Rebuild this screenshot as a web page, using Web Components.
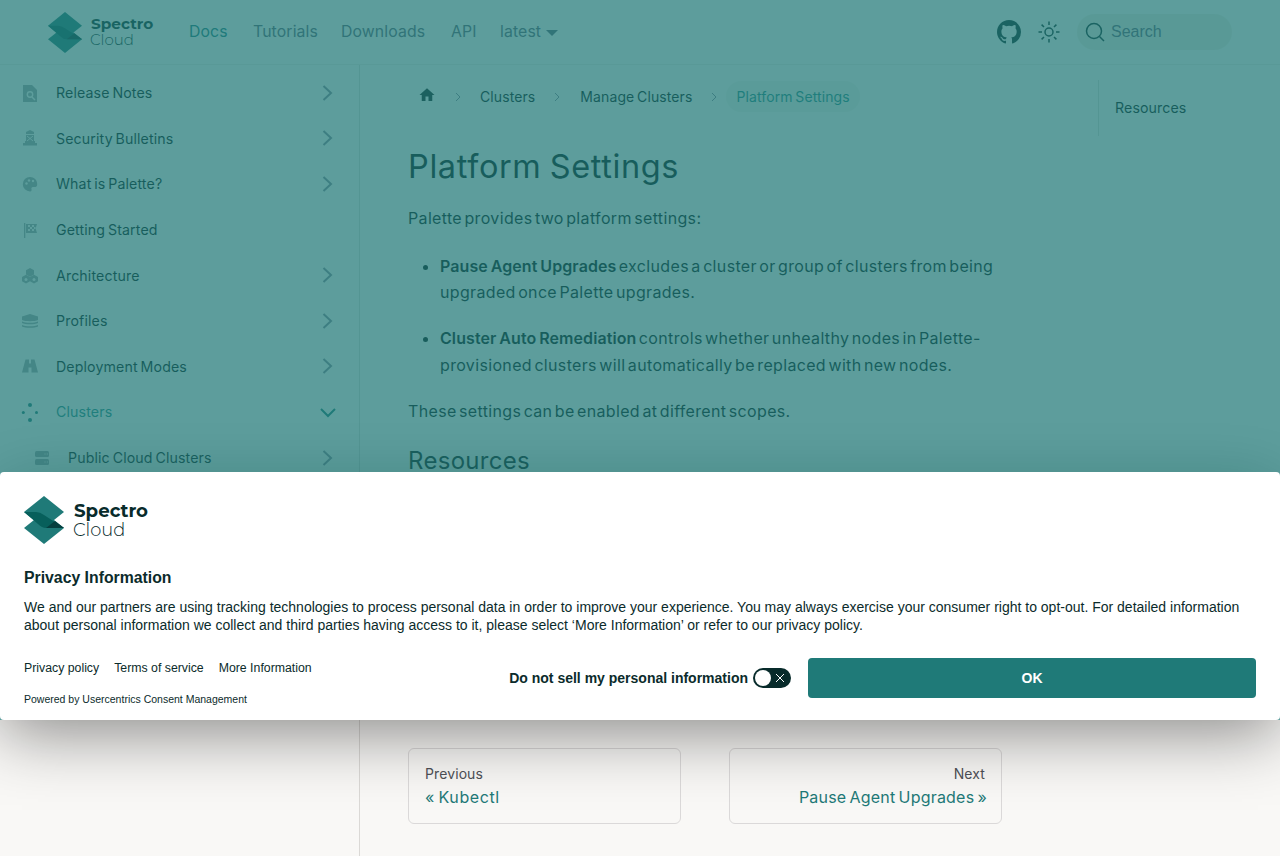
<!DOCTYPE html>
<html lang="en"><head><meta charset="utf-8"><title>Platform Settings</title>
<style>
html,body{margin:0;height:100%;overflow:hidden;background:#f9f8f6}
body{font-family:Inter,"Liberation Sans",sans-serif;color:#061414}
</style></head><body>
<template id="logo-t"><style>
:host{display:inline-flex;align-items:center;gap:var(--gap,8px);color:var(--ink,#082b2b);flex:none}
svg{display:block;flex:none}
.t{display:flex;flex-direction:column;font-family:Montserrat,Lato,sans-serif;font-size:var(--fs,15.300px);line-height:1.03;padding-top:var(--tp,0)}
b{font-weight:700;margin-left:1px}
span{font-weight:300;font-size:.98em}
</style>
<svg viewBox="0 0 40 48"><path d="M20 0 40 16 20 32 0 16Z" fill="#1f7a78"/><path d="M20 16 40 32 20 48 0 32Z" fill="#1f7a78"/><path d="M0 16 12 16 Q16 16 20 19L40 32H22Q18 32 14 28Z" fill="#075f5b"/><path d="M22 32 31 25 40 32Z" fill="#063f3f"/></svg>
<div class="t"><b>Spectro</b><span>Cloud</span></div></template>
<script>
function tpl(id){return document.getElementById(id).content.cloneNode(true)}
class SLogo extends HTMLElement{connectedCallback(){if(this.shadowRoot)return;this.attachShadow({mode:'open'}).append(tpl('logo-t'));
const s=this.shadowRoot.querySelector('svg');s.setAttribute('width',this.getAttribute('w'));s.setAttribute('height',this.getAttribute('h'));}}
customElements.define('s-logo',SLogo);
const H='#f9f8f6';
const ICONS={
release:`<path d="M3 2h9l5 5v12H3z"/><circle cx="10" cy="11.500" r="3.400" fill="${H}"/><circle cx="10" cy="11.500" r="2" /><path d="M12 14l3 3" stroke="${H}" stroke-width="1.500"/>`,
security:`<path d="M6 4l4-2 4 2v2H6zM6 7h8v6H6zM3 15h14v2.500H3zM5 13h10v2H5z"/><path d="M7 8l6 5M13 8l-6 5" stroke="${H}"/>`,
palette:`<path d="M10 3a7.200 7.200 0 1 0 0 14.400c1.800 0 1.800-1.400 1.400-2.700-.4-1.300.8-1.800 2.200-1.800h1.800c.9 0 1.800-.9 1.800-2.700C17.200 6.100 14 3 10 3z"/><circle cx="6.500" cy="9.500" r="1.200" fill="${H}"/><circle cx="9" cy="6.500" r="1.200" fill="${H}"/><circle cx="13" cy="7" r="1.200" fill="${H}"/>`,
flag:`<path d="M4 3h1.300v15H4zM6 4h11l-1.400 4.500L17 13H6z"/><path d="M8 5h2v2H8zM12 5h2v2h-2zM10 7h2v2h-2zM14 7h1.500v2H14zM8 9h2v2H8zM12 9h2v2h-2z" fill="${H}"/>`,
arch:`<path d="M10 3l4 2.200v4.300L10 11.700 6 9.500V5.200z"/><path d="M6 9.800l4 2.200v4.300L6 18.500 2 16.300V12zM14 9.800l4 2.200v4.300l-4 2.200-4-2.200V12z"/><circle cx="6" cy="14.500" r="1.500" fill="${H}"/><circle cx="14" cy="14.500" r="1.500" fill="${H}"/>`,
profiles:`<path d="M10 3l8 2.500V9c-3 1.600-13 1.600-16 0V5.500z"/><path d="M2 10.500c3 1.700 13 1.700 16 0V12c-3 1.700-13 1.700-16 0zM2 14c3 1.700 13 1.700 16 0v1.500c-3 1.700-13 1.700-16 0z"/>`,
bino:`<path d="M5.500 3.500h3.500v4h2v-4h3.500L18 16.500h-6.500v-5h-3v5H2z"/>`,
clusters:'<circle cx="10" cy="3" r="2"/><circle cx="10" cy="18" r="2"/><circle cx="3.300" cy="10.500" r="1.500"/><circle cx="16.500" cy="10.500" r="1.500"/>',
server:`<rect x="3" y="3" width="14" height="6" rx="1.500"/><rect x="3" y="11" width="14" height="6" rx="1.500"/><path d="M12.500 6h1M14.800 6h1M12.500 14h1M14.800 14h1" stroke="${H}"/>`};
class SIcon extends HTMLElement{connectedCallback(){if(this.shadowRoot)return;this.attachShadow({mode:'open'}).innerHTML=`<style>:host{display:block;width:20px;height:20px;color:inherit}svg{display:block;width:20px;height:20px;fill:currentColor}</style><svg viewBox="0 0 20 20">${ICONS[this.getAttribute('name')]}</svg>`}}
customElements.define('s-icon',SIcon);
class TopNav extends HTMLElement{connectedCallback(){if(this.shadowRoot)return;this.attachShadow({mode:'open'}).innerHTML=`<style>
:host{display:flex;align-items:center;height:65px;box-sizing:border-box;border-bottom:1px solid #eceae6;padding:0 48px;font-size:15.800px;background:#f9f8f6}
.lw{width:105px;flex:none;display:flex;align-items:center}
nav{display:flex;gap:24px;margin:0 0 2px 36px;letter-spacing:.12px;white-space:nowrap}
a{color:#5f6478;display:block}a.on{color:#207c80}
.v{display:flex;align-items:center;gap:5px}.car{width:0;height:0;border:6px solid transparent;border-top-color:#5f6478;border-bottom:0;margin-top:3px}
.r{margin-left:auto;display:flex;align-items:center}
.gh{width:24px;height:24px;display:block;margin-right:16px;fill:#0c2a2a}
.sun{width:24px;height:24px;display:block;margin-right:16px;stroke:#0c2a2a;fill:none}
.search{width:155px;height:36px;border-radius:18px;background:#eee9e3;display:flex;align-items:center;gap:6px;padding-left:8px;box-sizing:border-box;color:#5f6478;font:16px "Liberation Sans",sans-serif}
.search svg{width:20px;height:20px;stroke:#0c2a2a;fill:none;stroke-width:1.500}
</style>
<div class="lw"><s-logo w="34" h="41"></s-logo></div>
<nav><a class="on" style="width:40px">Docs</a><a style="width:64px">Tutorials</a><a style="width:86px">Downloads</a><a style="width:25px">API</a><a class="v">latest<i class="car"></i></a></nav>
<div class="r">
<svg class="gh" viewBox="0 0 16 16"><path d="M8 0C3.580 0 0 3.580 0 8c0 3.540 2.290 6.530 5.470 7.590.4.070.55-.17.55-.38v-1.340c-2.230.48-2.690-1.080-2.690-1.080-.36-.92-.89-1.170-.89-1.170-.73-.5.050-.49.050-.49.800.060 1.230.830 1.230.830.720 1.220 1.870.870 2.330.660.070-.520.280-.870.510-1.070-1.780-.200-3.640-.890-3.640-3.950 0-.870.310-1.590.820-2.150-.080-.200-.360-1.020.080-2.120 0 0 .670-.210 2.200.820a7.600 7.600 0 0 1 4 0c1.530-1.040 2.200-.820 2.200-.820.440 1.100.160 1.920.080 2.120.510.560.820 1.270.820 2.150 0 3.070-1.870 3.750-3.650 3.950.290.250.540.730.540 1.480v2.200c0 .210.150.460.550.380A8 8 0 0 0 16 8c0-4.420-3.580-8-8-8z"/></svg>
<svg class="sun" viewBox="0 0 24 24" stroke-width="1.500"><circle cx="12" cy="12" r="4"/><path d="M12 1.500v3.500M12 19v3.500M1.500 12H5M19 12h3.500M4.600 4.600l2.400 2.400M17 17l2.400 2.400M4.600 19.400 7 17M17 7l2.400-2.400"/></svg>
<div class="search"><svg viewBox="0 0 20 20"><circle cx="9" cy="9" r="7.500"/><path d="M14.500 14.500 19 19"/></svg><span>Search</span></div>
</div>`}}
customElements.define('top-nav',TopNav);
class SideItem extends HTMLElement{connectedCallback(){if(this.shadowRoot)return;
const sub=this.hasAttribute('sub'),open=this.hasAttribute('open'),on=this.hasAttribute('on'),ch=!this.hasAttribute('leaf');
this.attachShadow({mode:'open'}).innerHTML=`<style>
:host{display:flex;align-items:center;height:45.600px;padding:0 23px 0 ${sub?32:20}px;gap:16px;font-size:14.200px;color:${on?'#1f8a88':'#061414'};letter-spacing:.12px;word-spacing:-1.300px}
s-icon{color:${on?'#1f7a78':'#a0a4a8'};flex:none}
span{flex:1}
svg{width:16px;height:16px;fill:none;stroke:${open?'#1f7a78':'#8a8a9a'};stroke-width:2;flex:none}
</style><s-icon name="${this.getAttribute('icon')}"></s-icon><span><slot></slot></span>${ch?`<svg viewBox="0 0 16 16"><path d="${open?'M1 5l7 7 7-7':'M3.500 1 11 8 3.500 15'}"/></svg>`:''}`}}
customElements.define('side-item',SideItem);
class SideBar extends HTMLElement{connectedCallback(){if(this.shadowRoot)return;this.attachShadow({mode:'open'}).innerHTML=`<style>:host{display:block;width:360px;box-sizing:border-box;border-right:1px solid #dbd9d6;padding-top:5px;flex:none;height:791px}</style><slot></slot>`}}
customElements.define('side-bar',SideBar);
class CrumbBar extends HTMLElement{connectedCallback(){if(this.shadowRoot)return;this.attachShadow({mode:'open'}).innerHTML=`<style>
:host{display:flex;align-items:center;height:31px;font-size:14px;color:#061414;letter-spacing:.1px;word-spacing:-1.300px;white-space:nowrap}
.h{width:18px;height:18px;fill:#142222;margin:0 0 4px 10px;flex:none}
.s{width:8px;height:10px;fill:none;stroke:#8a8a9a;stroke-width:1;flex:none;margin:0 19px 0 18px}
.s.a{margin-right:18px}
.p{padding:0 10px;height:31px;line-height:31px;border-radius:16px;background:#f1efeb;color:#1f8a88;margin-left:-11px}
</style><svg class="h" viewBox="0 0 24 24"><path d="M10 20v-6h4v6h5v-8h3L12 3 2 12h3v8z"/></svg><svg class="s a" viewBox="0 0 8 10"><path d="M2 1l4 4-4 4"/></svg><span>Clusters</span><svg class="s" viewBox="0 0 8 10"><path d="M2 1l4 4-4 4"/></svg><span>Manage Clusters</span><svg class="s" viewBox="0 0 8 10"><path d="M2 1l4 4-4 4"/></svg><span class="p">Platform Settings</span>`}}
customElements.define('crumb-bar',CrumbBar);
class DocArticle extends HTMLElement{connectedCallback(){if(this.shadowRoot)return;this.attachShadow({mode:'open'}).innerHTML=`<style>
:host{display:block;width:594px;font-size:16px;line-height:26.600px;color:#061414;letter-spacing:.34px;word-spacing:-2.400px}
h1{font-weight:400;font-size:32.500px;line-height:40px;margin:35px 0 18px;letter-spacing:.62px;word-spacing:-1.500px}
h2{font-weight:400;font-size:24px;line-height:30px;margin:21px 0 0;letter-spacing:.3px;word-spacing:0}
p{margin:0 0 21px}
ul{margin:0 0 20px;padding-left:32px}
li{margin-bottom:19.500px}li:last-child{margin-bottom:0}
b{font-weight:600;word-spacing:-1.200px;letter-spacing:.08px}
</style><h1>Platform Settings</h1><p>Palette provides two platform settings:</p>
<ul><li><b>Pause Agent Upgrades</b> excludes a cluster or group of clusters from being upgraded once Palette upgrades.</li>
<li><b>Cluster Auto Remediation</b> controls whether unhealthy nodes in Palette-provisioned clusters will automatically be replaced with new nodes.</li></ul>
<p>These settings can be enabled at different scopes.</p><h2>Resources</h2>`}}
customElements.define('doc-article',DocArticle);
class PageCard extends HTMLElement{connectedCallback(){if(this.shadowRoot)return;const end=this.hasAttribute('end');this.attachShadow({mode:'open'}).innerHTML=`<style>
:host{display:block;width:273px;height:76px;box-sizing:border-box;border:1px solid #dbd9d9;border-radius:6px;padding:15px 16px 0;text-align:${end?'right':'left'}}
.a{font-size:14px;line-height:20px;color:#4e5157;letter-spacing:.1px}
.b{font-size:16px;line-height:26px;color:#1f7a78;word-spacing:-1.500px;letter-spacing:${end?'.2px':'.6px'};margin-right:${end?'-2px':'0'}}
</style><div class="a">${this.getAttribute('a')}</div><div class="b">${this.getAttribute('b')}</div>`}}
customElements.define('page-card',PageCard);
class PageTabs extends HTMLElement{connectedCallback(){if(this.shadowRoot)return;this.attachShadow({mode:'open'}).innerHTML=`<style>:host{display:flex;gap:48px;position:absolute;left:408px;top:748px}</style><slot></slot>`}}
customElements.define('page-tabs',PageTabs);
class TocBar extends HTMLElement{connectedCallback(){if(this.shadowRoot)return;this.attachShadow({mode:'open'}).innerHTML=`<style>:host{display:block;position:absolute;left:1098px;top:80px;height:56px;box-sizing:border-box;border-left:1px solid #dbd9d6;padding:17px 16px 0;font-size:14.200px;line-height:22px;color:#061414;letter-spacing:.1px}</style>Resources`}}
customElements.define('toc-bar',TocBar);
class BannerShadow extends HTMLElement{connectedCallback(){if(this.shadowRoot)return;this.attachShadow({mode:'open'}).innerHTML=`<style>:host{position:fixed;left:0;right:0;top:472px;height:248px;box-shadow:0 12px 64px 0 rgba(0,0,0,.46)}</style>`}}
customElements.define('banner-shadow',BannerShadow);
class Overlay extends HTMLElement{connectedCallback(){if(this.shadowRoot)return;this.attachShadow({mode:'open'}).innerHTML=`<style>:host{position:fixed;left:0;top:0;right:0;height:720px;background:rgba(32,122,120,.72)}</style>`}}
customElements.define('teal-overlay',Overlay);
class ConsentBanner extends HTMLElement{connectedCallback(){if(this.shadowRoot)return;this.attachShadow({mode:'open'}).innerHTML=`<style>
:host{position:fixed;left:0;right:0;top:472px;height:248px;box-sizing:border-box;background:#fff;border-radius:4px;padding:24px;color:#0b2b2b;font-family:"Liberation Sans",Arial,sans-serif;display:flex;flex-direction:column}
s-logo{--fs:18.200px;--ink:#082b2b;--gap:9px;--tp:1px;align-self:flex-start}
h2{font-size:15.800px;line-height:20px;margin:24px 0 0;font-weight:700}
p{font-size:14px;line-height:18px;margin:10px 0 0}
.row{display:flex;align-items:flex-start;margin-top:24px}
.links{font-size:12.300px;line-height:14px;margin-top:3px}
.links div{display:flex;gap:15px}
.links .pw{font-size:10.500px;line-height:13px;margin-top:17.500px}
.r{margin-left:auto;display:flex;align-items:center}
.lab{font-size:14px;font-weight:700;line-height:40px}
.tg{width:38px;height:20px;border-radius:10px;background:#082b2b;margin:0 17px 0 5px;position:relative}
.tg i{position:absolute;left:2px;top:2px;width:16px;height:16px;border-radius:50%;background:#fff}
.tg svg{position:absolute;right:7px;top:6px;width:8px;height:8px;stroke:#fff;stroke-width:1}
button{width:448px;height:40px;background:#1f7a78;color:#fff;border:0;border-radius:4px;font:700 14px "Liberation Sans",Arial,sans-serif}
</style><s-logo w="40" h="48"></s-logo><h2>Privacy Information</h2>
<p>We and our partners are using tracking technologies to process personal data in order to improve your experience. You may always exercise your consumer right to opt-out. For detailed information about personal information we collect and third parties having access to it, please select ‘More Information’ or refer to our privacy policy.</p>
<div class="row"><div class="links"><div><span>Privacy policy</span><span>Terms of service</span><span>More Information</span></div><div class="pw">Powered by Usercentrics Consent Management</div></div>
<div class="r"><span class="lab">Do not sell my personal information</span><span class="tg"><i></i><svg viewBox="0 0 8 8"><path d="M0 0l8 8M8 0 0 8"/></svg></span><button>OK</button></div></div>`}}
customElements.define('consent-banner',ConsentBanner);
</script>
<top-nav></top-nav>
<div style="display:flex">
<side-bar>
<side-item icon="release">Release Notes</side-item>
<side-item icon="security">Security Bulletins</side-item>
<side-item icon="palette">What is Palette?</side-item>
<side-item icon="flag" leaf>Getting Started</side-item>
<side-item icon="arch">Architecture</side-item>
<side-item icon="profiles">Profiles</side-item>
<side-item icon="bino">Deployment Modes</side-item>
<side-item icon="clusters" on open>Clusters</side-item>
<side-item icon="server" sub>Public Cloud Clusters</side-item>
</side-bar>
<main style="padding:16px 0 0 48px;flex:1"><crumb-bar></crumb-bar><doc-article></doc-article></main>
</div>
<toc-bar></toc-bar>
<page-tabs><page-card a="Previous" b="« Kubectl"></page-card><page-card end a="Next" b="Pause Agent Upgrades »"></page-card></page-tabs>
<banner-shadow></banner-shadow>
<teal-overlay></teal-overlay>
<consent-banner></consent-banner>
</body></html>
